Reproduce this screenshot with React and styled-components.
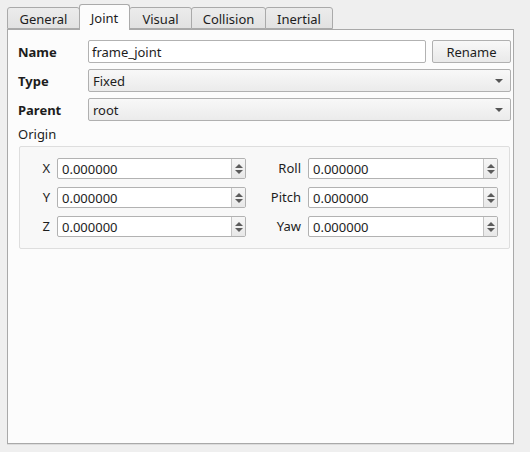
import React from "react";
import styled, { createGlobalStyle } from "styled-components";

const Global = createGlobalStyle`
  html, body {
    margin: 0;
    padding: 0;
    background: #efefef;
    font-family: "Noto Sans", "Open Sans", sans-serif;
    font-size: 13px;
    color: #1d1d1d;
  }
`;

const Window = styled.div`
  width: 530px;
  height: 452px;
  padding: 4px 0 0 7px;
  box-sizing: border-box;
`;

const TabBar = styled.div`
  display: flex;
  align-items: flex-end;
  height: 25px;
  position: relative;
  z-index: 1;
`;

const Tab = styled.div`
  box-sizing: border-box;
  height: ${p => (p.active ? "26px" : "22px")};
  width: ${p => p.w}px;
  margin-left: ${p => (p.first ? "0" : "-1px")};
  margin-bottom: ${p => (p.active ? "-1px" : "0")};
  border: 1px solid #aaaaaa;
  border-bottom: ${p => (p.active ? "none" : "1px solid #aaaaaa")};
  border-radius: 3px 3px 0 0;
  background: ${p => (p.active ? "#fcfcfc" : "linear-gradient(#ececec, #e2e2e2)")};
  display: flex;
  align-items: center;
  justify-content: center;
  padding-top: ${p => (p.active ? "0" : "1px")};
  color: #1d1d1d;
  z-index: ${p => (p.active ? 2 : 0)};
`;

const Panel = styled.div`
  box-sizing: border-box;
  width: 507px;
  height: 415px;
  border: 1px solid #a9a9a9;
  background: #fcfcfc;
  padding: 10px 2px 0 10px;
  box-shadow: 0 1px 0 #dcdcdc;
`;

const FormRow = styled.div`
  display: flex;
  align-items: center;
  height: 23px;
  margin-bottom: 6px;
`;

const Label = styled.div`
  width: 70px;
  font-weight: bold;
  flex-shrink: 0;
`;

const LineEdit = styled.div`
  flex: 1;
  box-sizing: border-box;
  height: 23px;
  border: 1px solid #b2b2b2;
  border-radius: 2px;
  background: #ffffff;
  display: flex;
  align-items: center;
  padding-left: 3px;
`;

const Button = styled.div`
  box-sizing: border-box;
  width: 79px;
  height: 23px;
  margin-left: 6px;
  border: 1px solid #b0b0b0;
  border-radius: 2px;
  background: linear-gradient(#f8f8f8, #e9e9e9);
  display: flex;
  align-items: center;
  justify-content: center;
`;

const Combo = styled.div`
  flex: 1;
  box-sizing: border-box;
  height: 23px;
  border: 1px solid #b0b0b0;
  border-radius: 2px;
  background: linear-gradient(#f8f8f8, #ebebeb);
  display: flex;
  align-items: center;
  justify-content: space-between;
  padding: 0 7px 0 4px;
`;

const DownArrow = styled.span`
  width: 0;
  height: 0;
  border-left: 4px solid transparent;
  border-right: 4px solid transparent;
  border-top: 4px solid #555555;
`;

const SectionTitle = styled.div`
  height: 19px;
  line-height: 15px;
`;

const Group = styled.div`
  box-sizing: border-box;
  width: 491px;
  margin: 0 0 0 1px;
  border: 1px solid #dedede;
  border-radius: 2px;
  background: #f8f8f8;
  padding: 11px 0 11px 0;
  display: grid;
  grid-template-columns: 37px 189px 62px 190px;
  row-gap: 8px;
`;

const AxisLabel = styled.div`
  text-align: right;
  padding-right: 7px;
  line-height: 21px;
`;

const Spin = styled.div`
  box-sizing: border-box;
  height: 21px;
  border: 1px solid #b2b2b2;
  border-radius: 2px;
  background: #ffffff;
  display: flex;
  overflow: hidden;
`;

const SpinText = styled.div`
  flex: 1;
  display: flex;
  align-items: center;
  padding-left: 4px;
`;

const SpinButtons = styled.div`
  width: 13px;
  border-left: 1px solid #c4c4c4;
  background: linear-gradient(#f6f6f6, #e8e8e8);
  display: flex;
  flex-direction: column;
  align-items: center;
  justify-content: center;
  gap: 2px;
`;

const Tri = styled.span`
  width: 0;
  height: 0;
  border-left: 4px solid transparent;
  border-right: 4px solid transparent;
  ${p => (p.up ? "border-bottom: 4px solid #5c5c5c;" : "border-top: 4px solid #5c5c5c;")}
`;

const tabs = [
  { name: "General", w: 73 },
  { name: "Joint", w: 51, active: true },
  { name: "Visual", w: 63 },
  { name: "Collision", w: 75 },
  { name: "Inertial", w: 68 },
];

const rows = [
  ["X", "Roll"],
  ["Y", "Pitch"],
  ["Z", "Yaw"],
];

const SpinBox = ({ value }) => (
  <Spin>
    <SpinText>{value}</SpinText>
    <SpinButtons>
      <Tri up />
      <Tri />
    </SpinButtons>
  </Spin>
);

const App = () => {
  return (
    <Window>
      <Global />
      <TabBar>
        {tabs.map((t, i) => (
          <Tab key={t.name} w={t.w} first={i === 0} active={t.active}>
            {t.name}
          </Tab>
        ))}
      </TabBar>
      <Panel>
        <FormRow>
          <Label>Name</Label>
          <LineEdit>frame_joint</LineEdit>
          <Button>Rename</Button>
        </FormRow>
        <FormRow>
          <Label>Type</Label>
          <Combo>
            Fixed
            <DownArrow />
          </Combo>
        </FormRow>
        <FormRow>
          <Label>Parent</Label>
          <Combo>
            root
            <DownArrow />
          </Combo>
        </FormRow>
        <SectionTitle>Origin</SectionTitle>
        <Group>
          {rows.map(([a, b]) => (
            <React.Fragment key={a}>
              <AxisLabel>{a}</AxisLabel>
              <SpinBox value="0.000000" />
              <AxisLabel>{b}</AxisLabel>
              <SpinBox value="0.000000" />
            </React.Fragment>
          ))}
        </Group>
      </Panel>
    </Window>
  );
};

export default App;
